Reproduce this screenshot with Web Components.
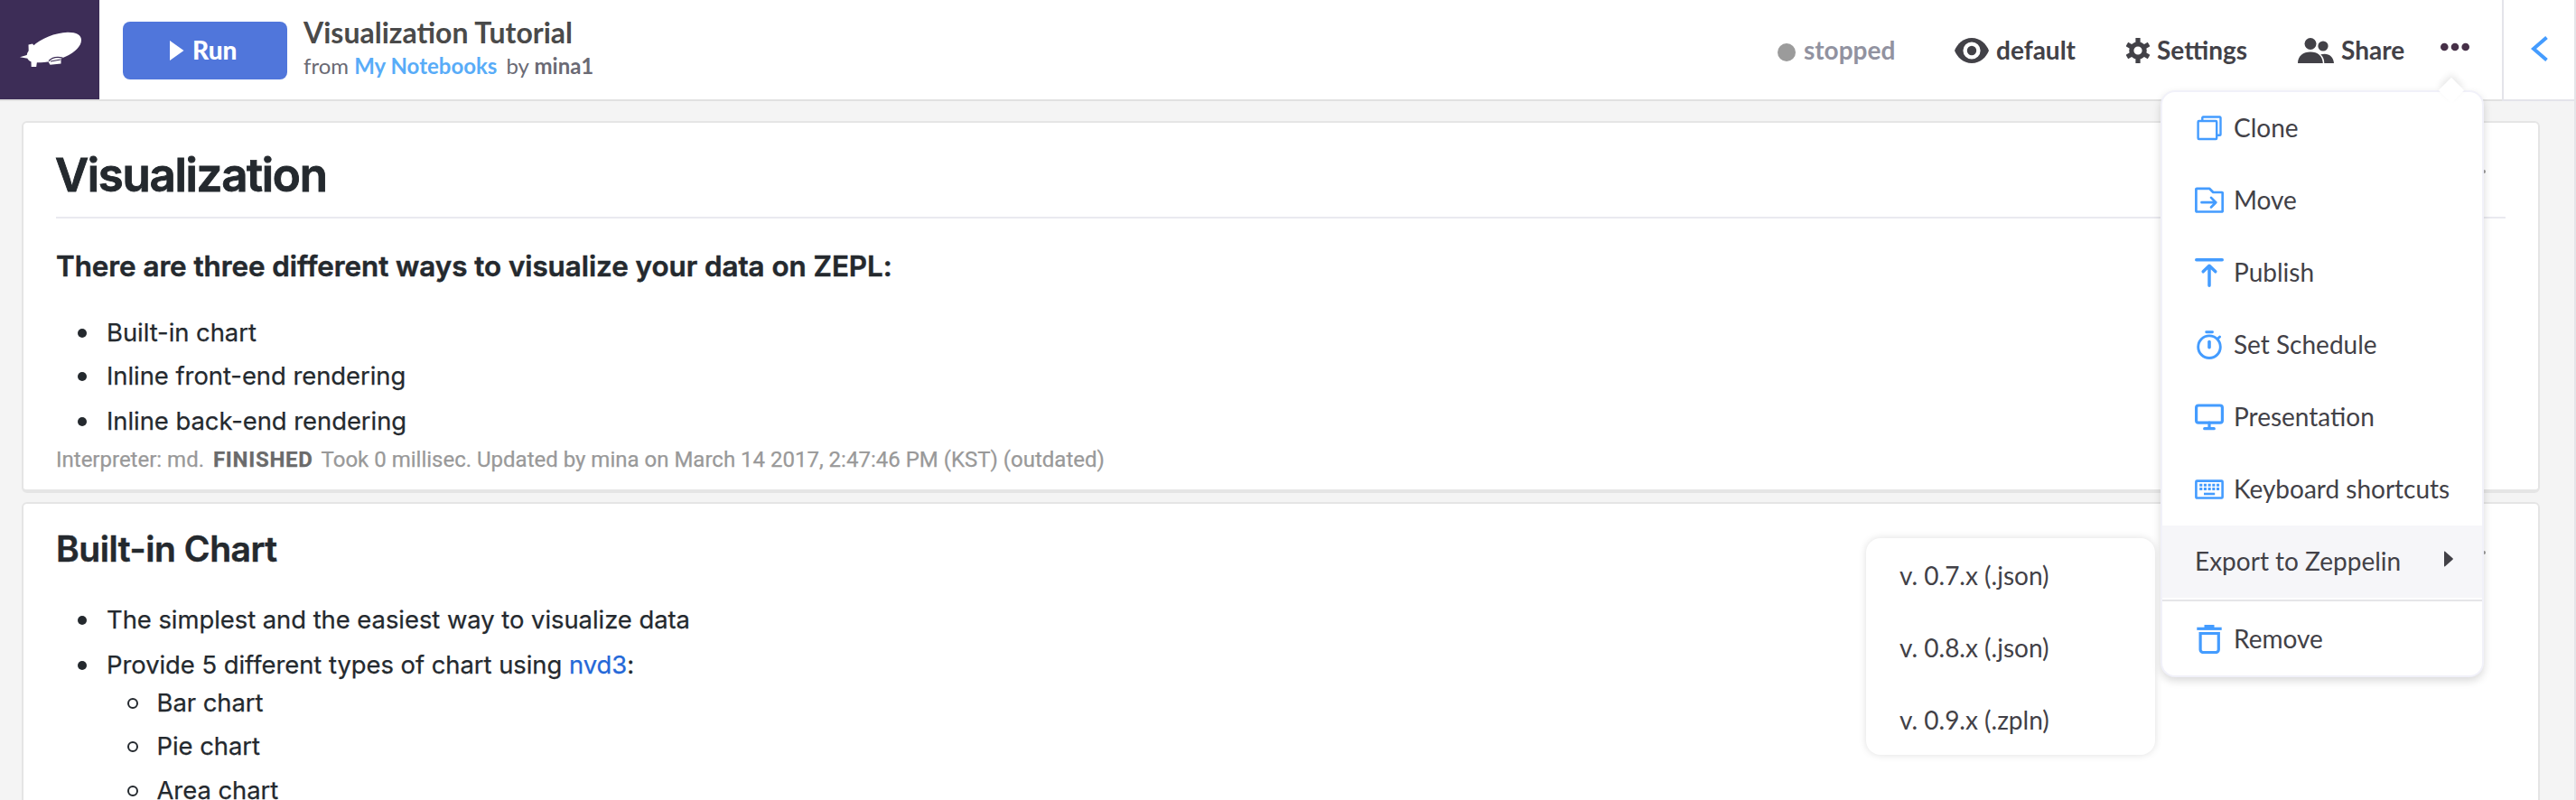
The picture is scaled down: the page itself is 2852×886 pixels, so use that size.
<!DOCTYPE html>
<html lang="en"><head><meta charset="utf-8"><title>Visualization Tutorial</title>
<style>
html,body{margin:0;height:100%;overflow:hidden}
body{background:#f4f4f4;font-family:Lato,sans-serif;color:#424147}
</style></head><body>
<zl-app></zl-app>
<script>
const define=(name,html)=>{
  const t=document.createElement('template');t.innerHTML=html;
  customElements.define(name,class extends HTMLElement{
    constructor(){super();this.attachShadow({mode:'open'}).append(t.content.cloneNode(true));}
  });
};

/* 32px line icons of the notebook menu */
const ICONS={
  clone:'<g stroke-width="2.4" stroke-linejoin="round"><rect x="3.6" y="8" width="20.600" height="20" rx="1"/><path d="M8.300 7.500V4.300a.8.8 0 0 1 .8-.8h18.600a.8.8 0 0 1 .8.8v18.600a.8.8 0 0 1-.8.8H25"/></g>',
  move:'<g stroke-width="2.700" stroke-linejoin="round" stroke-linecap="round"><path d="M1.400 27.700V3.600a.8.8 0 0 1 .8-.8h13.900l4.200 4.200h9.600a.8.8 0 0 1 .8.8v19.900a.8.8 0 0 1-.8.8H2.200a.8.8 0 0 1-.8-.8z"/><path d="M7.500 18.200h15.800M18 12.900l5.300 5.300L18 23.500"/></g>',
  publish:'<g stroke-width="3.500" stroke-linecap="round" stroke-linejoin="round"><path d="M1.750 1.750h28.500"/><path d="M16 30.200V8.500M9.200 14.800L16 8.300l6.800 6.500"/></g>',
  schedule:'<g stroke-width="2.900" stroke-linecap="round"><circle cx="16" cy="18.200" r="12.300"/><path d="M12.700 1.700h6.800M25.800 8.800l1.800-1.800"/><path d="M16 12.500v6.300" stroke-width="3.600"/></g>',
  presentation:'<g stroke-width="3.200" stroke-linecap="round"><rect x="1.600" y="3" width="28.800" height="19.200" rx="2.500"/><path d="M16 22v5.500M10.700 28.700h10.600"/></g>',
  keyboard:'<rect x="1.400" y="6.600" width="29.200" height="18.900" rx="1" stroke-width="2.600"/><g stroke-width="3"><path d="M5.200 11.300h22.400M5.200 15.600h22.400" stroke-dasharray="3.100 1.600"/></g><path d="M10 21h12.200" stroke-width="2.600"/>',
  remove:'<g stroke-width="3.200"><path d="M2.300 4.300h27.400"/><path d="M10.500 1.800h11" stroke-width="3.600"/><path d="M6.100 9.500h20.200v18a3 3 0 0 1-3 3H9.100a3 3 0 0 1-3-3z"/></g>'
};
customElements.define('menu-icon',class extends HTMLElement{
  constructor(){super();this.attachShadow({mode:'open'});}
  connectedCallback(){
    this.shadowRoot.innerHTML='<style>:host{display:block;width:32px;flex:none}svg{display:block;fill:none;stroke:#449cff}</style><svg width="32" height="32" viewBox="0 0 32 32">'+ICONS[this.getAttribute('name')]+'</svg>';
  }
});

define('run-button',`<style>
:host{display:flex;box-sizing:border-box;width:182px;height:64px;padding:0 0 2px 52px;gap:9px;align-items:center;border-radius:8px;background:#5076db;color:#fff;font:900 28px/40px Lato,sans-serif}
svg{display:block;margin-top:2px}
</style><svg width="16" height="22" viewBox="0 0 16 22"><path fill="#fff" d="M0 0l15.500 11L0 22z"/></svg><slot></slot>`);

define('tool-item',`<style>
:host{display:flex;align-items:center;flex:none;gap:8px;height:40px;font:700 28px/40px Lato,sans-serif}
::slotted(svg){display:block;flex:none;margin-top:2px}
</style><slot name="icon"></slot><slot></slot>`);

define('note-header',`<style>
:host{display:flex;height:110px;border-bottom:2px solid #e1e1e1;background:#fff}
.logo{width:110px;height:110px;background:#3d2d57;flex:none;margin-right:26px}
svg{display:block}
run-button{margin:24px 18px 0 0;flex:none}
.title{flex:1}
h1{margin:16px 0 0;font:700 32px/40px Lato,sans-serif;color:#4a4a4a;white-space:nowrap}
p{margin:0;font:400 24px/34px Lato,sans-serif;color:#6a6a74;white-space:nowrap}
a{color:#58acf8;font-weight:700;margin-right:10px}
nav{display:flex;padding-top:35px;flex:none;color:#424147}
.dot{width:20px;height:20px;border-radius:50%;background:#9b9b9b;margin:6px 1px 0 0}
.stopped{color:#9192a0;width:196px}
.eye,.set{width:190px}.share{width:158px}
.more{padding-top:12px;margin-right:36px}
.toggle{box-sizing:border-box;width:80px;height:112px;border-left:2px solid #e4e4ea;border-bottom:2px solid #e4e4ea;flex:none;padding:40px 0 0 30px}
</style>
<div class="logo"><svg width="110" height="110" viewBox="0 0 110 110"><g fill="#fff"><path d="M36.500 51C45 43 61 36 75 35.700 85 35.700 90 39 90 44.500 90 51 83 58 73 62.500 62 67.500 50 69.500 40 69.300 33 69 29.500 66 29.600 61.500 30 57.500 33 54 36.500 51z"/><path d="M31.500 49.500l4.500-1 2.700 3-5.500 9-1.500-4.500zM22 63.300l8.500-2.500v4zM34.500 68h6.500l-.8 6h-5.500z"/></g><path d="M53.500 68.500l14-4.300v6.300l-12 1.200z" fill="#fff"/><path d="M54 67.500c4-4.500 9-5 15.500-3.500M56 68l11-2" stroke="#3d2d57" stroke-width="1.200" fill="none"/></svg></div>
<run-button>Run</run-button>
<div class="title"><h1>Visualization Tutorial</h1><p>from <a>My Notebooks</a>by <b>mina1</b></p></div>
<nav>
<tool-item class="stopped"><i class="dot" slot="icon"></i>stopped</tool-item>
<tool-item class="eye"><svg slot="icon" width="38" height="28" viewBox="0 0 38 28"><path fill="#424147" d="M19 0C28.500 0 35 6.500 38 14 35 21.500 28.500 28 19 28S3 21.500 0 14C3 6.500 9.500 0 19 0z"/><circle cx="19" cy="14" r="7.400" fill="#424147" stroke="#fff" stroke-width="4.400"/></svg>default</tool-item>
<tool-item class="set"><svg slot="icon" width="26" height="28" viewBox="0 0 26 28"><g fill="none" stroke="#424147"><path stroke-width="5.200" d="M13 0v7M13 21v7M.9 7l6 3.500M19.100 17.500l6 3.500M.9 21l6-3.500M19.100 10.500l6-3.500"/><circle cx="13" cy="14" r="7.200" stroke-width="5.200"/></g></svg>Settings</tool-item>
<tool-item class="share"><svg slot="icon" width="40" height="28" viewBox="0 0 40 28"><g fill="#424147"><circle cx="14" cy="6.500" r="6.500"/><circle cx="28" cy="9" r="5.600"/><path d="M0 28c0-8 6-12.500 14-12.500S27.500 20 27.800 28zM25.300 18.300c8-2.300 14.200 1.700 14.700 9.700H29.300c0-4-1.300-7.300-4-9.700z"/></g></svg>Share</tool-item>
<svg class="more" width="32" height="10" viewBox="0 0 32 10"><g fill="#463048"><circle cx="4.300" cy="5" r="4.300"/><circle cx="16" cy="5" r="4.300"/><circle cx="27.700" cy="5" r="4.300"/></g></svg>
</nav>
<div class="toggle"><svg width="20" height="28" viewBox="0 0 20 28"><path d="M17.500 1.500L3 14l14.500 12.500" fill="none" stroke="#449cff" stroke-width="4"/></svg></div>`);

define('note-card',`<style>
:host{display:block;position:relative;box-sizing:border-box;background:#fff;border:2px solid #e5e5e5;border-bottom-width:4px;border-radius:6px;padding:0 36px;font:400 27.4px/42px Inter,sans-serif;letter-spacing:-.03px;color:#24292e;-webkit-text-stroke:.25px}
.handle{position:absolute;right:58px;top:var(--handle-top);width:4px;height:4px;border-radius:50%;background:#999}
</style><slot></slot><i class="handle"></i>`);

define('md-item',`<style>
:host{display:flex;align-items:center;height:42px;padding-left:24px;white-space:pre}
i{box-sizing:border-box;width:10px;height:10px;border-radius:50%;background:currentColor;margin:2px 22px 0 0;flex:none}
:host([nested]){padding-left:79px}
:host([nested]) i{width:12px;height:12px;background:none;border:2px solid currentColor;margin-right:20.500px}
</style><i></i><span><slot></slot></span>`);

define('note-status',`<style>
:host{display:block;font:400 24px/30px Roboto,sans-serif;letter-spacing:0;color:#999;white-space:nowrap}
::slotted(b){color:#6b6b6b;letter-spacing:.7px;margin:0 9px 0 10px}
</style><slot></slot>`);

define('menu-item',`<style>
:host{display:flex;align-items:center;box-sizing:border-box;height:80px;padding:0 36px;gap:11px;font:400 28px/40px Lato,sans-serif;color:#424147;white-space:nowrap}
:host([active]){background:#f6f6f9}
span{position:relative;top:var(--text-shift,0)}
.arrow{display:none;margin:-6px 0 0 auto}
:host([active]) .arrow{display:block}
</style><slot name="icon"></slot><span><slot></slot></span><svg class="arrow" width="10" height="18" viewBox="0 0 10 18"><path fill="#424147" d="M0 1.200Q0 0 1 .8L9.500 8.300q.7.7 0 1.400L1 17.200Q0 18 0 16.800z"/></svg>`);

define('note-menu',`<style>
:host{display:block;box-sizing:border-box;width:358px;border:2px solid #f1f1f9;border-radius:16px;background:#fff;box-shadow:0 4px 10px rgba(0,0,0,.15);--text-shift:-1px}
.caret{position:absolute;left:310px;top:-12px;width:20px;height:20px;transform:rotate(45deg);background:#fff;box-shadow:-3px -3px 7px rgba(0,0,0,.09)}
hr{margin:2px 0;border:0;height:2px;background:#e5e5e8}
</style><i class="caret"></i>
<menu-item><menu-icon slot="icon" name="clone"></menu-icon>Clone</menu-item>
<menu-item><menu-icon slot="icon" name="move"></menu-icon>Move</menu-item>
<menu-item><menu-icon slot="icon" name="publish"></menu-icon>Publish</menu-item>
<menu-item><menu-icon slot="icon" name="schedule"></menu-icon>Set Schedule</menu-item>
<menu-item><menu-icon slot="icon" name="presentation"></menu-icon>Presentation</menu-item>
<menu-item><menu-icon slot="icon" name="keyboard"></menu-icon>Keyboard shortcuts</menu-item>
<menu-item active style="padding-right:32px">Export to Zeppelin</menu-item>
<hr><menu-item><menu-icon slot="icon" name="remove"></menu-icon>Remove</menu-item>`);

define('export-menu',`<style>
:host{display:block;width:320px;border-radius:16px;background:#fff;box-shadow:0 0 8px rgba(0,0,0,.13);--text-shift:1px}
menu-item{padding-left:37px}
</style><menu-item>v. 0.7.x (.json)</menu-item><menu-item>v. 0.8.x (.json)</menu-item><menu-item>v. 0.9.x (.zpln)</menu-item>`);

define('zl-app',`<style>
:host{display:block;position:relative;box-sizing:border-box;width:2852px;height:886px;overflow:hidden;border-right:2px solid #e5e5e8}
main{display:flex;flex-direction:column;gap:10px;padding:22px 38px 0 24px}
.first{height:412px;--handle-top:52px}.second{height:380px;--handle-top:52px}
h1,h2,h3{margin:0;font-weight:600;white-space:nowrap;-webkit-text-stroke:.5px}
h1{margin-top:26px;padding-bottom:14px;border-bottom:2px solid #eaeaf0;font-size:51px;line-height:64px;letter-spacing:-1.300px;text-indent:-1px;-webkit-text-stroke:.9px}
h2{margin-top:22px;font-size:39px;line-height:56px;letter-spacing:-.43px}
h3{margin-top:29px;font-size:31.350px;line-height:48px;letter-spacing:-.03px}
.gap6{margin-top:6px}.gap7{margin-top:7px}.gap8{margin-top:8px}
.lead1{margin-top:28px}.lead2{margin-top:29px}
a{color:#2468d8}
note-menu{position:absolute;left:2392px;top:100px}
export-menu{position:absolute;left:2066px;top:596px}
</style>
<note-header></note-header>
<main>
<note-card class="first">
<h1>Visualization</h1>
<h3>There are three different ways to visualize your data on ZEPL:</h3>
<md-item class="lead1">Built-in chart</md-item>
<md-item class="gap6">Inline front-end rendering</md-item>
<md-item class="gap8">Inline back-end rendering</md-item>
<note-status class="gap7">Interpreter: md.<b>FINISHED</b>Took 0 millisec. Updated by mina on March 14 2017, 2:47:46 PM (KST) (outdated)</note-status>
</note-card>
<note-card class="second">
<h2>Built-in Chart</h2>
<md-item class="lead2">The simplest and the easiest way to visualize data</md-item>
<md-item class="gap8">Provide 5 different types of chart using <a>nvd3</a>:</md-item>
<md-item nested>Bar chart</md-item>
<md-item nested class="gap6">Pie chart</md-item>
<md-item nested class="gap7">Area chart</md-item>
</note-card>
</main>
<export-menu></export-menu>
<note-menu></note-menu>`);
</script></body></html>
